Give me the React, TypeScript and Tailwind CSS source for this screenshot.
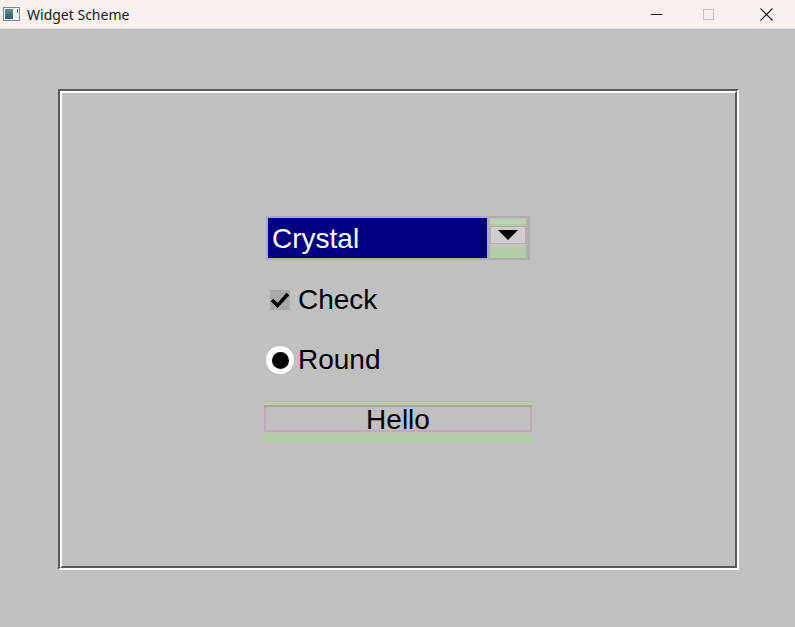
import React from "react";

const FONT = { fontFamily: '"Liberation Sans", Arial, sans-serif' };

function TitleBar() {
  return (
    <div className="flex h-[29px] items-center bg-[#f9f0ef] border-b border-[#e6dede]">
      {/* app icon */}
      <div className="ml-[3px] flex h-[14px] w-[17px] items-center border border-[#7c8a90] bg-[#eef2f2]">
        <div className="ml-[1px] h-[10px] w-[8px] bg-gradient-to-b from-[#5a8f8a] to-[#2f5d6a]" />
        <div className="ml-[4px] h-[4px] w-[1px] self-start mt-[1px] bg-[#506070]" />
      </div>
      <span className="ml-[7px] text-[14px] text-[#1a1a1a]" style={{ fontFamily: '"Noto Sans", "Open Sans", sans-serif' }}>
        Widget Scheme
      </span>
      <div className="ml-auto flex h-full items-center">
        <div className="flex h-full w-[46px] items-center justify-center">
          <div className="h-[1px] w-[11px] bg-[#111]" />
        </div>
        <div className="flex h-full w-[58px] items-center justify-center">
          <div className="h-[11px] w-[11px] border border-[#c8c2c2]" />
        </div>
        <div className="flex h-full w-[58px] items-center justify-center">
          <svg width="13" height="13" viewBox="0 0 13 13">
            <path d="M0.5 0.5 L12.5 12.5 M12.5 0.5 L0.5 12.5" stroke="#111" strokeWidth="1.1" />
          </svg>
        </div>
      </div>
    </div>
  );
}

function Combo() {
  return (
    <div className="flex h-[44px] w-[264px] border-2 border-[#adadad] bg-[#adadad]">
      <div className="flex flex-1 items-center bg-[#000080] pl-[4px] pt-[2px] text-[28px] text-white" style={FONT}>
        Crystal
      </div>
      <div className="ml-[1px] flex w-[40px] flex-col border-x-2 border-[#b0b0b0] bg-[#b8b8b0]">
        <div className="h-[2px] bg-[#c0c4bc]" />
        <div className="h-[2px] bg-[#b8d4a8]" />
        <div className="h-[2px] bg-[#c8d0c0]" />
        <div className="h-[2px] bg-[#b4cca4]" />
        <div className="h-[1px] bg-[#b4a4a8]" />
        <div className="flex h-[17px] items-center justify-center border-x border-b border-[#c0a8b4] bg-[#d0ccd0]">
          <svg width="20" height="10" viewBox="0 0 20 10">
            <path d="M0 0 H20 L10 10 Z" fill="#000" />
          </svg>
        </div>
        <div className="flex-1 bg-gradient-to-b from-[#bcc8b4] to-[#b0d0a0]" />
      </div>
    </div>
  );
}

function Check() {
  return (
    <div className="flex h-[30px] items-center">
      <div className="relative ml-[4px] h-[20px] w-[20px] bg-[#a8a8a8]">
        <svg className="absolute left-0 top-0" width="20" height="20" viewBox="0 0 20 20">
          <path d="M2 10 L7.5 15.5 L18 4" fill="none" stroke="#000" strokeWidth="3.6" />
        </svg>
      </div>
      <span className="ml-[8px] text-[28px] leading-none text-black" style={FONT}>
        Check
      </span>
    </div>
  );
}

function Radio() {
  return (
    <div className="flex h-[30px] items-center">
      <div className="flex h-[28px] w-[28px] items-center justify-center rounded-full bg-white">
        <div className="h-[17px] w-[17px] rounded-full bg-black" />
      </div>
      <span className="ml-[4px] text-[28px] leading-none text-black" style={FONT}>
        Round
      </span>
    </div>
  );
}

function HelloButton() {
  return (
    <div className="flex h-[41px] w-[268px] flex-col bg-[#b8bcb4]">
      <div className="h-[1px] bg-[#b4b8ac]" />
      <div className="h-[3px] bg-[#b6d0a6]" />
      <div className="h-[2px] bg-[#aca0a0]" />
      <div className="flex h-[25px] items-center justify-center border-x-2 border-b-2 border-[#c4a8b8] bg-[#c0c0c0] pt-[3px] text-[28px] leading-none text-black" style={FONT}>
        Hello
      </div>
      <div className="flex-1 bg-gradient-to-b from-[#bcc4b4] to-[#b0d0a0]" />
    </div>
  );
}

export default function App() {
  return (
    <div className="flex h-[627px] w-[795px] flex-col overflow-hidden">
      <TitleBar />
      <div className="flex-1 bg-[#c0c0c0] pl-[58px] pt-[60px]">
        {/* etched frame */}
        <div className="h-[481px] w-[681px] border-[2px] border-t-[#5a5a5a] border-l-[#5a5a5a] border-b-white border-r-white">
          <div className="h-full w-full border-[2px] border-t-white border-l-white border-b-[#5a5a5a] border-r-[#5a5a5a]">
            <div className="ml-[202px] mt-[123px] flex flex-col">
              <div className="ml-[2px]">
                <Combo />
              </div>
              <div className="ml-[2px] mt-[25px]">
                <Check />
              </div>
              <div className="ml-[2px] mt-[30px]">
                <Radio />
              </div>
              <div className="mt-[26px]">
                <HelloButton />
              </div>
            </div>
          </div>
        </div>
      </div>
    </div>
  );
}
